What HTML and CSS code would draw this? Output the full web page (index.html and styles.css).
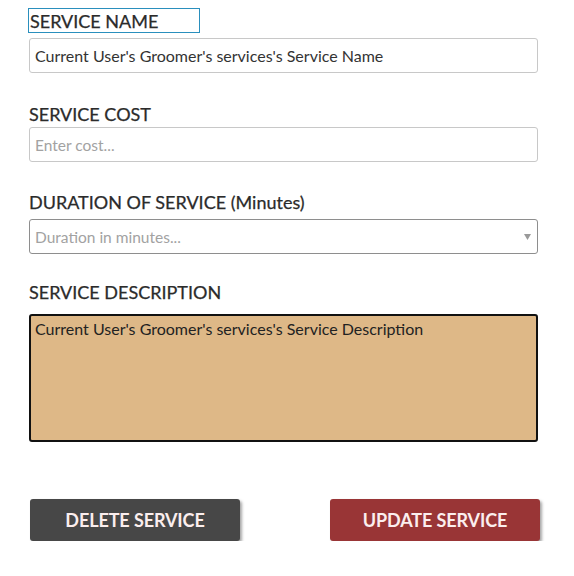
FILE: index.html
```html
<!DOCTYPE html>
<html>
<head>
<meta charset="utf-8">
<link rel="stylesheet" href="styles.css">
</head>
<body>
<form class="form">
  <div class="group g1">
    <label class="label focused">SERVICE NAME</label>
    <input class="field" type="text" value="Current User's Groomer's services's Service Name">
  </div>
  <div class="group g2">
    <label class="label">SERVICE COST</label>
    <input class="field" type="text" placeholder="Enter cost...">
  </div>
  <div class="group g3">
    <label class="label">DURATION OF SERVICE (Minutes)</label>
    <div class="field select">
      <span class="placeholder">Duration in minutes...</span>
      <svg class="arrow" width="7" height="6" viewBox="0 0 7 6"><path d="M0 0 H7 L3.5 6 Z" fill="#9a9a9a"/></svg>
    </div>
  </div>
  <div class="group g4">
    <label class="label">SERVICE DESCRIPTION</label>
    <textarea class="desc">Current User's Groomer's services's Service Description</textarea>
  </div>
  <div class="actions">
    <button type="button" class="btn btn-delete">DELETE SERVICE</button>
    <button type="button" class="btn btn-update">UPDATE SERVICE</button>
  </div>
</form>
</body>
</html>
```
FILE: styles.css
```css
html, body {
  margin: 0;
  padding: 0;
  background: #ffffff;
}
body {
  font-family: Lato, "Liberation Sans", sans-serif;
  color: #2b2b2b;
}
.form {
  width: 509px;
  padding-left: 29px;
  padding-top: 8px;
  display: flex;
  flex-direction: column;
}
.group {
  display: flex;
  flex-direction: column;
  align-items: flex-start;
}
.label {
  display: block;
  font-size: 18px;
  line-height: 22px;
  color: #2b2b2b;
  white-space: nowrap;
  -webkit-text-stroke: 0.25px #2b2b2b;
}
.focused {
  box-sizing: border-box;
  width: 172px;
  height: 25px;
  margin-left: -1px;
  border: 1px solid #2a8fbd;
  padding: 1px 0 0 1px;
  margin-bottom: 5px;
}
.g2 { margin-top: 30px; }
.g2 .label { margin-bottom: 2px; }
.g3 { margin-top: 29px; }
.g3 .label { margin-bottom: 6px; }
.g4 { margin-top: 27px; }
.g4 .label { margin-bottom: 11px; }
.field {
  box-sizing: border-box;
  width: 509px;
  height: 35px;
  border: 1px solid #c8c8c8;
  border-radius: 3px;
  padding: 0 5px;
  font-family: Lato, "Liberation Sans", sans-serif;
  font-size: 16px;
  color: #333333;
  background: #ffffff;
  outline: none;
  margin: 0;
}
.field::placeholder {
  color: #a2a2a2;
  font-size: 15.5px;
}
.select {
  display: flex;
  align-items: center;
  justify-content: space-between;
  border-color: #8e8e8e;
  padding-right: 6px;
}
.placeholder {
  color: #a2a2a2;
  font-size: 15.5px;
}
.arrow {
  display: block;
}
.desc {
  box-sizing: border-box;
  width: 509px;
  height: 128px;
  border: 2px solid #111111;
  border-radius: 3px;
  background: #deb887;
  color: #222222;
  font-family: Lato, "Liberation Sans", sans-serif;
  font-size: 16px;
  line-height: 19px;
  padding: 3px 4px;
  resize: none;
  margin: 0;
  outline: none;
}
.actions {
  display: flex;
  justify-content: space-between;
  margin-top: 57px;
  padding-left: 1px;
  width: 510px;
}
.btn {
  width: 210px;
  height: 42px;
  border: none;
  border-radius: 3px;
  font-family: Lato, "Liberation Sans", sans-serif;
  font-weight: 700;
  font-size: 18px;
  letter-spacing: -0.1px;
  color: #fbeeee;
  box-shadow: 2px 2px 3px rgba(0, 0, 0, 0.35);
  padding: 0;
  cursor: pointer;
}
.btn-delete {
  background: #474747;
}
.btn-update {
  background: #993536;
}
```
